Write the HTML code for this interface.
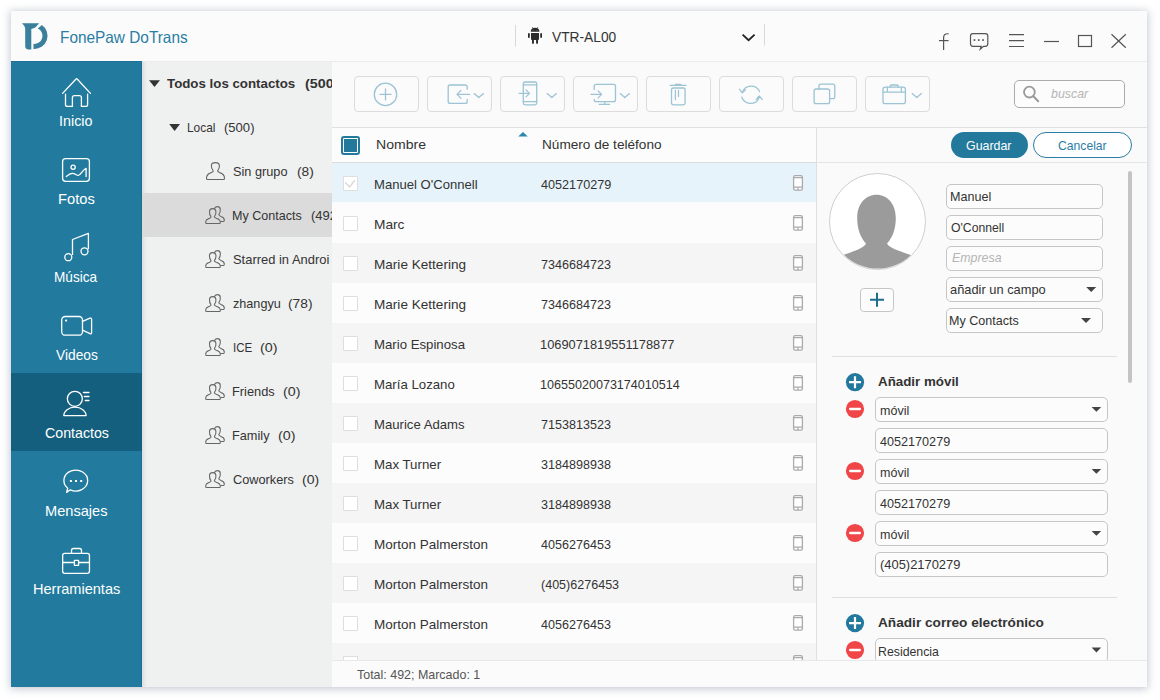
<!DOCTYPE html>
<html><head><meta charset="utf-8">
<style>
*{box-sizing:border-box;margin:0;padding:0}
html,body{width:1160px;height:700px;overflow:hidden;background:#fff;font-family:"Liberation Sans",sans-serif}
.a{position:absolute}
.t{position:absolute;white-space:pre;line-height:1;transform-origin:0 0}
#clipR{position:absolute;left:817px;top:162px;width:330px;height:498px;overflow:hidden}
#clipG{position:absolute;left:142px;top:61px;width:190px;height:626px;overflow:hidden}
</style></head><body>
<div class="a" style="left:11px;top:11px;width:1136px;height:676px;background:#fafafa;box-shadow:0 1px 8px 1px rgba(60,80,110,.30)"></div>
<div class="a" style="left:11px;top:11px;width:1136px;height:50px;background:#fbfbfb"></div>
<div class="a" style="left:142px;top:61px;width:1005px;height:1px;background:#ebebeb"></div>
<div class="a" style="left:11px;top:61px;width:131px;height:626px;background:#227b9e;border-top:1px solid #1c7196;border-right:1px solid #1b7093"></div>
<div class="a" style="left:11px;top:373px;width:131px;height:78px;background:#155f7e"></div>
<div class="a" style="left:142px;top:62px;width:190px;height:625px;background:#eff0f0"></div>
<div class="a" style="left:142px;top:62px;width:5px;height:625px;background:linear-gradient(to right,#dcdee2,#eff0f0)"></div>
<div class="a" style="left:142px;top:193px;width:190px;height:44px;background:#dbdbdb"></div>
<div class="a" style="left:332px;top:62px;width:815px;height:65px;background:#fafafa"></div>
<div class="a" style="left:332px;top:127px;width:815px;height:1px;background:#e0e0e0"></div>
<div class="a" style="left:332px;top:128px;width:484px;height:532px;background:#fcfcfc"></div>
<div class="a" style="left:332px;top:162px;width:484px;height:1px;background:#dcdcdc"></div>
<div class="a" style="left:332px;top:163px;width:484px;height:39px;background:#e6f3fa"></div>
<div class="a" style="left:332px;top:243px;width:484px;height:40px;background:#f5f5f5"></div>
<div class="a" style="left:332px;top:323px;width:484px;height:40px;background:#f5f5f5"></div>
<div class="a" style="left:332px;top:403px;width:484px;height:40px;background:#f5f5f5"></div>
<div class="a" style="left:332px;top:483px;width:484px;height:40px;background:#f5f5f5"></div>
<div class="a" style="left:332px;top:563px;width:484px;height:40px;background:#f5f5f5"></div>
<div class="a" style="left:332px;top:643px;width:484px;height:17px;background:#f5f5f5"></div>
<div class="a" style="left:816px;top:128px;width:1px;height:532px;background:#e0e0e0"></div>
<div class="a" style="left:817px;top:128px;width:330px;height:532px;background:#fafafa"></div>
<div class="a" style="left:817px;top:162px;width:330px;height:1px;background:#e6e6e6"></div>
<div class="a" style="left:332px;top:660px;width:815px;height:27px;background:#fbfbfb"></div>
<div class="a" style="left:332px;top:660px;width:815px;height:1px;background:#e8e8e8"></div>
<div class="a" style="left:341px;top:136px;width:19px;height:19px;border:2px solid #22799c;border-radius:3px;background:#fff"></div>
<div class="a" style="left:344px;top:139px;width:13px;height:13px;background:#22799c"></div>
<div class="a" style="left:343px;top:176px;width:15px;height:15px;border:1px solid #dedede;background:#fff;border-radius:1px"></div>
<div class="a" style="left:343px;top:216px;width:15px;height:15px;border:1px solid #dedede;background:#fff;border-radius:1px"></div>
<div class="a" style="left:343px;top:256px;width:15px;height:15px;border:1px solid #dedede;background:#fff;border-radius:1px"></div>
<div class="a" style="left:343px;top:296px;width:15px;height:15px;border:1px solid #dedede;background:#fff;border-radius:1px"></div>
<div class="a" style="left:343px;top:336px;width:15px;height:15px;border:1px solid #dedede;background:#fff;border-radius:1px"></div>
<div class="a" style="left:343px;top:376px;width:15px;height:15px;border:1px solid #dedede;background:#fff;border-radius:1px"></div>
<div class="a" style="left:343px;top:416px;width:15px;height:15px;border:1px solid #dedede;background:#fff;border-radius:1px"></div>
<div class="a" style="left:343px;top:456px;width:15px;height:15px;border:1px solid #dedede;background:#fff;border-radius:1px"></div>
<div class="a" style="left:343px;top:496px;width:15px;height:15px;border:1px solid #dedede;background:#fff;border-radius:1px"></div>
<div class="a" style="left:343px;top:536px;width:15px;height:15px;border:1px solid #dedede;background:#fff;border-radius:1px"></div>
<div class="a" style="left:343px;top:576px;width:15px;height:15px;border:1px solid #dedede;background:#fff;border-radius:1px"></div>
<div class="a" style="left:343px;top:616px;width:15px;height:15px;border:1px solid #dedede;background:#fff;border-radius:1px"></div>
<div class="a" style="left:343px;top:656px;width:15px;height:4px;border:1px solid #dedede;border-bottom:none;background:#fff;border-radius:1px"></div>
<div class="a" style="left:354px;top:76px;width:65px;height:36px;border:1px solid #dcdcdc;border-radius:4px;background:#fbfbfb"></div>
<div class="a" style="left:427px;top:76px;width:65px;height:36px;border:1px solid #dcdcdc;border-radius:4px;background:#fbfbfb"></div>
<div class="a" style="left:500px;top:76px;width:65px;height:36px;border:1px solid #dcdcdc;border-radius:4px;background:#fbfbfb"></div>
<div class="a" style="left:573px;top:76px;width:65px;height:36px;border:1px solid #dcdcdc;border-radius:4px;background:#fbfbfb"></div>
<div class="a" style="left:646px;top:76px;width:65px;height:36px;border:1px solid #dcdcdc;border-radius:4px;background:#fbfbfb"></div>
<div class="a" style="left:719px;top:76px;width:65px;height:36px;border:1px solid #dcdcdc;border-radius:4px;background:#fbfbfb"></div>
<div class="a" style="left:792px;top:76px;width:65px;height:36px;border:1px solid #dcdcdc;border-radius:4px;background:#fbfbfb"></div>
<div class="a" style="left:865px;top:76px;width:65px;height:36px;border:1px solid #dcdcdc;border-radius:4px;background:#fbfbfb"></div>
<div class="a" style="left:1014px;top:80px;width:111px;height:28px;border:1px solid #ababab;border-radius:5px;background:#fcfcfc"></div>
<div class="a" style="left:951px;top:132px;width:77px;height:26px;border-radius:13px;background:#22799c"></div>
<div class="a" style="left:1033px;top:132px;width:99px;height:26px;border-radius:13px;border:1px solid #2a7da3;background:#fff"></div>
<div class="a" style="left:829px;top:173px;width:97px;height:97px;border-radius:50%;border:1px solid #cfcfcf;background:#fff"></div>
<div class="a" style="left:860px;top:288px;width:34px;height:24px;border:1px solid #c6c6c6;border-radius:4px;background:#fcfcfc"></div>
<div class="a" style="left:946px;top:184px;width:157px;height:25px;border:1px solid #c6c6c6;border-radius:5px;background:#fcfcfc"></div>
<div class="a" style="left:946px;top:215px;width:157px;height:25px;border:1px solid #c6c6c6;border-radius:5px;background:#fcfcfc"></div>
<div class="a" style="left:946px;top:246px;width:157px;height:25px;border:1px solid #c6c6c6;border-radius:5px;background:#fcfcfc"></div>
<div class="a" style="left:946px;top:277px;width:157px;height:25px;border:1px solid #c6c6c6;border-radius:5px;background:#fcfcfc"></div>
<div class="a" style="left:946px;top:308px;width:157px;height:25px;border:1px solid #c6c6c6;border-radius:5px;background:#fcfcfc"></div>
<div class="a" style="left:832px;top:356px;width:285px;height:1px;background:#e0e0e0"></div>
<div class="a" style="left:832px;top:597px;width:285px;height:1px;background:#e0e0e0"></div>
<div class="a" style="left:875px;top:397px;width:233px;height:25px;border:1px solid #c6c6c6;border-radius:5px;background:#fcfcfc"></div>
<div class="a" style="left:875px;top:428px;width:233px;height:25px;border:1px solid #c6c6c6;border-radius:5px;background:#fcfcfc"></div>
<div class="a" style="left:875px;top:459px;width:233px;height:25px;border:1px solid #c6c6c6;border-radius:5px;background:#fcfcfc"></div>
<div class="a" style="left:875px;top:490px;width:233px;height:25px;border:1px solid #c6c6c6;border-radius:5px;background:#fcfcfc"></div>
<div class="a" style="left:875px;top:521px;width:233px;height:25px;border:1px solid #c6c6c6;border-radius:5px;background:#fcfcfc"></div>
<div class="a" style="left:875px;top:552px;width:233px;height:25px;border:1px solid #c6c6c6;border-radius:5px;background:#fcfcfc"></div>
<div class="a" style="left:875px;top:638px;width:233px;height:25px;border:1px solid #c6c6c6;border-radius:5px;background:#fcfcfc"></div>
<div class="a" style="left:1128px;top:171px;width:4px;height:212px;border-radius:2px;background:#c4c4c4"></div>
<div class="a" style="left:332px;top:660px;width:815px;height:27px;background:#fbfbfb;border-top:1px solid #e8e8e8"></div>
<svg class="a" style="left:0;top:0" width="1160" height="700" viewBox="0 0 1160 700"><g transform="translate(18,19)" fill="#3a7f9b"><path d="M4,4.2 L21.2,4.2 L17.6,8.3 Q15.8,9.7 13.3,9.9 L13.3,30.6 L10.5,30.6 Q7.2,30.2 7.2,27 L7.2,9.2 Q6.6,6.6 4,4.2 Z"/><path d="M23.9,6.07 A13.1,13.1 0 0 1 15.5,29.9 L15.5,24.85 A8.1,8.1 0 0 0 19.8,9.44 Z"/></g><rect x="515" y="25" width="1" height="21.5" fill="#d9d9d9"/><rect x="764" y="24" width="1" height="21.5" fill="#d9d9d9"/><g fill="#2b2b2b"><path d="M530.8,31.7 A4.3,3.9 0 0 1 539.4,31.7 Z"/><path d="M531,33 H539 V39 Q539,40 538,40 H532 Q531,40 531,39 Z"/><rect x="528" y="33" width="1.8" height="5" rx="0.9"/><rect x="540.2" y="33" width="1.8" height="5" rx="0.9"/><rect x="532" y="39" width="1.9" height="4.8" rx="0.9"/><rect x="536.1" y="39" width="1.9" height="4.8" rx="0.9"/><line x1="532.3" y1="27" x2="533.2" y2="28.6" stroke="#2b2b2b" stroke-width="0.6"/><line x1="537.9" y1="27" x2="537" y2="28.6" stroke="#2b2b2b" stroke-width="0.6"/></g><circle cx="533.2" cy="30.2" r="0.5" fill="#777"/><circle cx="537" cy="30.2" r="0.5" fill="#777"/><polyline points="742.6,34.6 748.6,40.2 754.6,34.6" stroke="#222" stroke-width="1.8" fill="none"/><path d="M948.6,33.8 Q943.6,33.2 943.6,37.5 V50" stroke="#555" stroke-width="1.2" fill="none"/><path d="M939,40.6 H948.6" stroke="#555" stroke-width="1.2" fill="none"/><path d="M973,33.6 H985.3 Q987.8,33.6 987.8,36.1 V43.8 Q987.8,46.3 985.3,46.3 H983.5 L980.3,49.2 L981.2,46.3 H973 Q970.5,46.3 970.5,43.8 V36.1 Q970.5,33.6 973,33.6 Z" stroke="#555" stroke-width="1.2" fill="none"/><g fill="#555"><rect x="973.6" y="39.2" width="1.7" height="1.7"/><rect x="977.9" y="39.2" width="1.7" height="1.7"/><rect x="982.2" y="39.2" width="1.7" height="1.7"/></g><path d="M1009,34.6 H1024 M1009,40.6 H1024 M1009,46.5 H1024" stroke="#555" stroke-width="1.2" fill="none"/><path d="M1044,41.5 H1059" stroke="#555" stroke-width="1.2" fill="none"/><rect x="1078.5" y="35.5" width="13" height="11" stroke="#555" stroke-width="1.2" fill="none"/><path d="M1111.5,34.2 L1125.8,47.8 M1125.8,34.2 L1111.5,47.8" stroke="#555" stroke-width="1.2" fill="none"/><g stroke="#fff" stroke-width="1.3" fill="none" stroke-linecap="round" stroke-linejoin="round"><path d="M62.6,93.4 L75.8,79.2 Q76.6,78.4 77.4,79.2 L90.4,93.4"/><path d="M65.5,94.2 V104.4 Q65.5,106.4 67.5,106.4 H72.4 V97.6 Q72.4,95.6 74.4,95.6 H79.4 Q81.4,95.6 81.4,97.6 V106.4 H85.6 Q87.6,106.4 87.6,104.4 V94.2"/><rect x="62.6" y="158.6" width="26.8" height="22.7" rx="3"/><circle cx="73.1" cy="167.3" r="2.1"/><path d="M66.3,176.5 C68.5,174.5 70.5,173.3 72.5,173.3 C75,173.3 76.3,175.4 78.2,175.4 C80.8,175.4 82.5,169.5 86.1,168.3 V176.6"/><path d="M72.5,254.4 V239.5 L88.4,233.4 V248.4"/><circle cx="68.3" cy="257.2" r="3.5"/><circle cx="84.5" cy="251.3" r="3.5"/><rect x="61.7" y="316.5" width="20.8" height="18.7" rx="3.5"/><path d="M82.5,321.4 L90,318.2 Q91.6,317.6 91.6,319.3 V332.6 Q91.6,334.3 90,333.6 L82.5,330.2"/><circle cx="66.1" cy="320.6" r="0.5"/><circle cx="74.85" cy="398.85" r="7.5"/><path d="M63.8,415.6 A11.15,8.4 0 0 1 86.1,415.6 Z"/><path d="M83.4,392.5 H89 M84.3,396.5 H89 M85.3,400.5 H89"/><path d="M67.7,488.2 A11.9,10.4 0 1 1 70.3,489.8 L66.6,492.4 Z"/></g><g fill="#fff"><rect x="69.9" y="480" width="2" height="2"/><rect x="75" y="480" width="2" height="2"/><rect x="80.2" y="480" width="2" height="2"/></g><g stroke="#fff" stroke-width="1.3" fill="none" stroke-linecap="round" stroke-linejoin="round"><rect x="62.65" y="553.4" width="26.8" height="19.9" rx="2"/><path d="M71.5,553.4 V550.5 Q71.5,548.5 73.5,548.5 H79.5 Q81.5,548.5 81.5,550.5 V553.4"/><path d="M62.65,562.5 H74.4 M78.6,562.5 H89.45"/><rect x="74.4" y="560.4" width="4.2" height="4.9"/></g><path d="M149,80.2 H160 L154.5,87 Z" fill="#333"/><path d="M169.2,124 H180 L174.6,131 Z" fill="#333"/><path d="M213.2,170.8 C211.6,169 211.2,166.8 211.4,165 C211.7,163.2 213.2,162.6 215.4,162.6 C217.6,162.6 219.1,163.4 219.4,165.3 C219.6,167 219.2,169 217.6,170.8 C217.5,171.6 218.2,172.1 219.6,172.6 C223,173.6 224.5,176 224.5,178.2 Q224.5,179.5 223.6,179.5 L207.4,179.5 Q206.5,179.5 206.5,178.2 C206.5,176 208,173.6 211.3,172.6 C212.8,172.1 213.4,171.6 213.2,170.8 Z" stroke="#666" stroke-width="1.1" fill="none" stroke-linejoin="round"/><g transform="translate(0,0)"><path d="M211,216.6 C209.6,215 209.4,212.8 209.5,211.2 C209.7,209.3 210.9,208.6 212.7,208.6 C214.5,208.6 215.7,209.3 215.9,211.2 C216.1,212.8 215.8,215 214.4,216.6 C214.3,217.3 214.9,217.8 216.3,218.3 C219.2,219.2 220.3,221 220.3,222.2 Q220.3,223.5 219.5,223.5 L206.5,223.5 Q205.7,223.5 205.7,222.2 C205.7,221 206.8,219.2 209.6,218.3 C210.9,217.8 211.1,217.3 211,216.6 Z" stroke="#666" stroke-width="1.1" fill="none" stroke-linejoin="round"/><path d="M214.3,208.9 C214.8,207.3 215.9,206.6 217.2,206.6 C219,206.6 220.2,207.5 220.3,209.4 C220.5,211.2 220,213.2 218.8,214.6 C218.8,215.4 219.4,215.9 221,216.4 C223.4,217.2 224.3,218.8 224.3,219.9 Q224.3,221.5 223.5,221.5 L220.6,221.5" stroke="#666" stroke-width="1.1" fill="none" stroke-linejoin="round"/></g><g transform="translate(0,44)"><path d="M211,216.6 C209.6,215 209.4,212.8 209.5,211.2 C209.7,209.3 210.9,208.6 212.7,208.6 C214.5,208.6 215.7,209.3 215.9,211.2 C216.1,212.8 215.8,215 214.4,216.6 C214.3,217.3 214.9,217.8 216.3,218.3 C219.2,219.2 220.3,221 220.3,222.2 Q220.3,223.5 219.5,223.5 L206.5,223.5 Q205.7,223.5 205.7,222.2 C205.7,221 206.8,219.2 209.6,218.3 C210.9,217.8 211.1,217.3 211,216.6 Z" stroke="#666" stroke-width="1.1" fill="none" stroke-linejoin="round"/><path d="M214.3,208.9 C214.8,207.3 215.9,206.6 217.2,206.6 C219,206.6 220.2,207.5 220.3,209.4 C220.5,211.2 220,213.2 218.8,214.6 C218.8,215.4 219.4,215.9 221,216.4 C223.4,217.2 224.3,218.8 224.3,219.9 Q224.3,221.5 223.5,221.5 L220.6,221.5" stroke="#666" stroke-width="1.1" fill="none" stroke-linejoin="round"/></g><g transform="translate(0,88)"><path d="M211,216.6 C209.6,215 209.4,212.8 209.5,211.2 C209.7,209.3 210.9,208.6 212.7,208.6 C214.5,208.6 215.7,209.3 215.9,211.2 C216.1,212.8 215.8,215 214.4,216.6 C214.3,217.3 214.9,217.8 216.3,218.3 C219.2,219.2 220.3,221 220.3,222.2 Q220.3,223.5 219.5,223.5 L206.5,223.5 Q205.7,223.5 205.7,222.2 C205.7,221 206.8,219.2 209.6,218.3 C210.9,217.8 211.1,217.3 211,216.6 Z" stroke="#666" stroke-width="1.1" fill="none" stroke-linejoin="round"/><path d="M214.3,208.9 C214.8,207.3 215.9,206.6 217.2,206.6 C219,206.6 220.2,207.5 220.3,209.4 C220.5,211.2 220,213.2 218.8,214.6 C218.8,215.4 219.4,215.9 221,216.4 C223.4,217.2 224.3,218.8 224.3,219.9 Q224.3,221.5 223.5,221.5 L220.6,221.5" stroke="#666" stroke-width="1.1" fill="none" stroke-linejoin="round"/></g><g transform="translate(0,132)"><path d="M211,216.6 C209.6,215 209.4,212.8 209.5,211.2 C209.7,209.3 210.9,208.6 212.7,208.6 C214.5,208.6 215.7,209.3 215.9,211.2 C216.1,212.8 215.8,215 214.4,216.6 C214.3,217.3 214.9,217.8 216.3,218.3 C219.2,219.2 220.3,221 220.3,222.2 Q220.3,223.5 219.5,223.5 L206.5,223.5 Q205.7,223.5 205.7,222.2 C205.7,221 206.8,219.2 209.6,218.3 C210.9,217.8 211.1,217.3 211,216.6 Z" stroke="#666" stroke-width="1.1" fill="none" stroke-linejoin="round"/><path d="M214.3,208.9 C214.8,207.3 215.9,206.6 217.2,206.6 C219,206.6 220.2,207.5 220.3,209.4 C220.5,211.2 220,213.2 218.8,214.6 C218.8,215.4 219.4,215.9 221,216.4 C223.4,217.2 224.3,218.8 224.3,219.9 Q224.3,221.5 223.5,221.5 L220.6,221.5" stroke="#666" stroke-width="1.1" fill="none" stroke-linejoin="round"/></g><g transform="translate(0,176)"><path d="M211,216.6 C209.6,215 209.4,212.8 209.5,211.2 C209.7,209.3 210.9,208.6 212.7,208.6 C214.5,208.6 215.7,209.3 215.9,211.2 C216.1,212.8 215.8,215 214.4,216.6 C214.3,217.3 214.9,217.8 216.3,218.3 C219.2,219.2 220.3,221 220.3,222.2 Q220.3,223.5 219.5,223.5 L206.5,223.5 Q205.7,223.5 205.7,222.2 C205.7,221 206.8,219.2 209.6,218.3 C210.9,217.8 211.1,217.3 211,216.6 Z" stroke="#666" stroke-width="1.1" fill="none" stroke-linejoin="round"/><path d="M214.3,208.9 C214.8,207.3 215.9,206.6 217.2,206.6 C219,206.6 220.2,207.5 220.3,209.4 C220.5,211.2 220,213.2 218.8,214.6 C218.8,215.4 219.4,215.9 221,216.4 C223.4,217.2 224.3,218.8 224.3,219.9 Q224.3,221.5 223.5,221.5 L220.6,221.5" stroke="#666" stroke-width="1.1" fill="none" stroke-linejoin="round"/></g><g transform="translate(0,220)"><path d="M211,216.6 C209.6,215 209.4,212.8 209.5,211.2 C209.7,209.3 210.9,208.6 212.7,208.6 C214.5,208.6 215.7,209.3 215.9,211.2 C216.1,212.8 215.8,215 214.4,216.6 C214.3,217.3 214.9,217.8 216.3,218.3 C219.2,219.2 220.3,221 220.3,222.2 Q220.3,223.5 219.5,223.5 L206.5,223.5 Q205.7,223.5 205.7,222.2 C205.7,221 206.8,219.2 209.6,218.3 C210.9,217.8 211.1,217.3 211,216.6 Z" stroke="#666" stroke-width="1.1" fill="none" stroke-linejoin="round"/><path d="M214.3,208.9 C214.8,207.3 215.9,206.6 217.2,206.6 C219,206.6 220.2,207.5 220.3,209.4 C220.5,211.2 220,213.2 218.8,214.6 C218.8,215.4 219.4,215.9 221,216.4 C223.4,217.2 224.3,218.8 224.3,219.9 Q224.3,221.5 223.5,221.5 L220.6,221.5" stroke="#666" stroke-width="1.1" fill="none" stroke-linejoin="round"/></g><g transform="translate(0,264)"><path d="M211,216.6 C209.6,215 209.4,212.8 209.5,211.2 C209.7,209.3 210.9,208.6 212.7,208.6 C214.5,208.6 215.7,209.3 215.9,211.2 C216.1,212.8 215.8,215 214.4,216.6 C214.3,217.3 214.9,217.8 216.3,218.3 C219.2,219.2 220.3,221 220.3,222.2 Q220.3,223.5 219.5,223.5 L206.5,223.5 Q205.7,223.5 205.7,222.2 C205.7,221 206.8,219.2 209.6,218.3 C210.9,217.8 211.1,217.3 211,216.6 Z" stroke="#666" stroke-width="1.1" fill="none" stroke-linejoin="round"/><path d="M214.3,208.9 C214.8,207.3 215.9,206.6 217.2,206.6 C219,206.6 220.2,207.5 220.3,209.4 C220.5,211.2 220,213.2 218.8,214.6 C218.8,215.4 219.4,215.9 221,216.4 C223.4,217.2 224.3,218.8 224.3,219.9 Q224.3,221.5 223.5,221.5 L220.6,221.5" stroke="#666" stroke-width="1.1" fill="none" stroke-linejoin="round"/></g><g transform="translate(0,76)"><circle cx="385.5" cy="18.4" r="11.2" stroke="#9cc4d4" stroke-width="1.3" fill="none" stroke-linecap="round" stroke-linejoin="round"/><path d="M380,18.4 H391 M385.5,12.9 V23.9" stroke="#9cc4d4" stroke-width="1.3" fill="none" stroke-linecap="round" stroke-linejoin="round"/><path d="M467.2,13.2 V11 Q467.2,9 465.2,9 H450.2 Q448.2,9 448.2,11 V25.4 Q448.2,27.4 450.2,27.4 H465.2 Q467.2,27.4 467.2,25.4 V23.4" stroke="#9cc4d4" stroke-width="1.3" fill="none" stroke-linecap="round" stroke-linejoin="round"/><path d="M469.6,18.4 H457 M461,14.4 L457,18.4 L461,22.4" stroke="#9cc4d4" stroke-width="1.3" fill="none" stroke-linecap="round" stroke-linejoin="round"/><polyline points="474.2,17.6 478.8,21.6 483.4,17.6" stroke="#9cc4d4" stroke-width="1.3" fill="none" stroke-linecap="round" stroke-linejoin="round"/><rect x="523.3" y="6" width="13.4" height="22.8" rx="1.8" stroke="#9cc4d4" stroke-width="1.3" fill="none" stroke-linecap="round" stroke-linejoin="round"/><path d="M523.3,8.8 H536.7 M523.3,25.6 H536.7" stroke="#9cc4d4" stroke-width="1.3" fill="none" stroke-linecap="round" stroke-linejoin="round"/><path d="M519.2,17.4 H529.5 M526,13.9 L529.5,17.4 L526,20.9" stroke="#9cc4d4" stroke-width="1.3" fill="none" stroke-linecap="round" stroke-linejoin="round"/><polyline points="547.2,17.6 551.8,21.6 556.4,17.6" stroke="#9cc4d4" stroke-width="1.3" fill="none" stroke-linecap="round" stroke-linejoin="round"/><path d="M594.2,13.5 V10.3 Q594.2,8.3 596.2,8.3 H613.5 Q615.5,8.3 615.5,10.3 V23.7 Q615.5,25.7 613.5,25.7 H596.2 Q594.2,25.7 594.2,23.7 V23.3" stroke="#9cc4d4" stroke-width="1.3" fill="none" stroke-linecap="round" stroke-linejoin="round"/><path d="M604.8,25.7 V28.4 M599.3,28.4 H609.5" stroke="#9cc4d4" stroke-width="1.3" fill="none" stroke-linecap="round" stroke-linejoin="round"/><path d="M591,18.4 H601.6 M598.1,14.9 L601.6,18.4 L598.1,21.9" stroke="#9cc4d4" stroke-width="1.3" fill="none" stroke-linecap="round" stroke-linejoin="round"/><polyline points="620.2,17.6 624.8,21.6 629.4,17.6" stroke="#9cc4d4" stroke-width="1.3" fill="none" stroke-linecap="round" stroke-linejoin="round"/><path d="M670.2,9.4 H686 M675.5,8.5 H680.8" stroke="#9cc4d4" stroke-width="1.3" fill="none" stroke-linecap="round" stroke-linejoin="round"/><rect x="671.5" y="12" width="13.6" height="16.8" rx="1.8" stroke="#9cc4d4" stroke-width="1.3" fill="none" stroke-linecap="round" stroke-linejoin="round"/><path d="M675.4,14.4 V23.6 M678.5,14.4 V20.5" stroke="#9cc4d4" stroke-width="1.3" fill="none" stroke-linecap="round" stroke-linejoin="round"/><path d="M742.4,16.2 A9.3,9.3 0 0 1 759.6,15.5" stroke="#9cc4d4" stroke-width="1.3" fill="none" stroke-linecap="round" stroke-linejoin="round"/><path d="M759.2,21.4 A9.3,9.3 0 0 1 741.8,21.2" stroke="#9cc4d4" stroke-width="1.3" fill="none" stroke-linecap="round" stroke-linejoin="round"/><path d="M739.6,13.3 L742.3,16.8 L745.4,13.8" stroke="#9cc4d4" stroke-width="1.3" fill="none" stroke-linecap="round" stroke-linejoin="round"/><path d="M756.2,23.4 L759.2,20 L762.2,23.4" stroke="#9cc4d4" stroke-width="1.3" fill="none" stroke-linecap="round" stroke-linejoin="round"/><path d="M819,13 V10 Q819,8.1 820.9,8.1 H832.9 Q834.8,8.1 834.8,10 V20.8 Q834.8,22.7 832.9,22.7 H829.6" stroke="#9cc4d4" stroke-width="1.3" fill="none" stroke-linecap="round" stroke-linejoin="round"/><rect x="814.1" y="13" width="15.5" height="14.6" rx="1.9" stroke="#9cc4d4" stroke-width="1.3" fill="none" stroke-linecap="round" stroke-linejoin="round"/><rect x="883" y="11.2" width="22.4" height="16.4" rx="2.2" stroke="#9cc4d4" stroke-width="1.3" fill="none" stroke-linecap="round" stroke-linejoin="round"/><path d="M890.2,11.2 V10.2 Q890.2,9 891.4,9 H897.1 Q898.3,9 898.3,10.2 V11.2" stroke="#9cc4d4" stroke-width="1.3" fill="none" stroke-linecap="round" stroke-linejoin="round"/><path d="M883,16.1 H905.4 M887.4,11.2 V16.1 M901.4,11.2 V16.1" stroke="#9cc4d4" stroke-width="1.3" fill="none" stroke-linecap="round" stroke-linejoin="round"/><polyline points="912.2,17.6 916.8,21.6 921.4,17.6" stroke="#9cc4d4" stroke-width="1.3" fill="none" stroke-linecap="round" stroke-linejoin="round"/></g><circle cx="1029.4" cy="92.1" r="5.4" stroke="#9a9a9a" stroke-width="1.8" fill="none"/><path d="M1033.4,96.3 L1038.2,101.2" stroke="#9a9a9a" stroke-width="2" stroke-linecap="round"/><path d="M518.2,136.6 H527.8 L523,132 Z" fill="#2a87b0"/><polyline points="345.3,182.6 349.6,187 354.8,180.2" stroke="#d8d8d8" stroke-width="1.4" fill="none"/><g clip-path="url(#clipList)"><g transform="translate(0,0)"><rect x="793.6" y="175.6" width="8.8" height="14.5" rx="1.6" stroke="#ababab" stroke-width="1.3" fill="#fff"/><path d="M793.6,177.6 H802.4 M793.6,187.2 H802.4 M798,187.2 V190" stroke="#ababab" stroke-width="1.2"/></g><g transform="translate(0,40)"><rect x="793.6" y="175.6" width="8.8" height="14.5" rx="1.6" stroke="#ababab" stroke-width="1.3" fill="#fff"/><path d="M793.6,177.6 H802.4 M793.6,187.2 H802.4 M798,187.2 V190" stroke="#ababab" stroke-width="1.2"/></g><g transform="translate(0,80)"><rect x="793.6" y="175.6" width="8.8" height="14.5" rx="1.6" stroke="#ababab" stroke-width="1.3" fill="#fff"/><path d="M793.6,177.6 H802.4 M793.6,187.2 H802.4 M798,187.2 V190" stroke="#ababab" stroke-width="1.2"/></g><g transform="translate(0,120)"><rect x="793.6" y="175.6" width="8.8" height="14.5" rx="1.6" stroke="#ababab" stroke-width="1.3" fill="#fff"/><path d="M793.6,177.6 H802.4 M793.6,187.2 H802.4 M798,187.2 V190" stroke="#ababab" stroke-width="1.2"/></g><g transform="translate(0,160)"><rect x="793.6" y="175.6" width="8.8" height="14.5" rx="1.6" stroke="#ababab" stroke-width="1.3" fill="#fff"/><path d="M793.6,177.6 H802.4 M793.6,187.2 H802.4 M798,187.2 V190" stroke="#ababab" stroke-width="1.2"/></g><g transform="translate(0,200)"><rect x="793.6" y="175.6" width="8.8" height="14.5" rx="1.6" stroke="#ababab" stroke-width="1.3" fill="#fff"/><path d="M793.6,177.6 H802.4 M793.6,187.2 H802.4 M798,187.2 V190" stroke="#ababab" stroke-width="1.2"/></g><g transform="translate(0,240)"><rect x="793.6" y="175.6" width="8.8" height="14.5" rx="1.6" stroke="#ababab" stroke-width="1.3" fill="#fff"/><path d="M793.6,177.6 H802.4 M793.6,187.2 H802.4 M798,187.2 V190" stroke="#ababab" stroke-width="1.2"/></g><g transform="translate(0,280)"><rect x="793.6" y="175.6" width="8.8" height="14.5" rx="1.6" stroke="#ababab" stroke-width="1.3" fill="#fff"/><path d="M793.6,177.6 H802.4 M793.6,187.2 H802.4 M798,187.2 V190" stroke="#ababab" stroke-width="1.2"/></g><g transform="translate(0,320)"><rect x="793.6" y="175.6" width="8.8" height="14.5" rx="1.6" stroke="#ababab" stroke-width="1.3" fill="#fff"/><path d="M793.6,177.6 H802.4 M793.6,187.2 H802.4 M798,187.2 V190" stroke="#ababab" stroke-width="1.2"/></g><g transform="translate(0,360)"><rect x="793.6" y="175.6" width="8.8" height="14.5" rx="1.6" stroke="#ababab" stroke-width="1.3" fill="#fff"/><path d="M793.6,177.6 H802.4 M793.6,187.2 H802.4 M798,187.2 V190" stroke="#ababab" stroke-width="1.2"/></g><g transform="translate(0,400)"><rect x="793.6" y="175.6" width="8.8" height="14.5" rx="1.6" stroke="#ababab" stroke-width="1.3" fill="#fff"/><path d="M793.6,177.6 H802.4 M793.6,187.2 H802.4 M798,187.2 V190" stroke="#ababab" stroke-width="1.2"/></g><g transform="translate(0,440)"><rect x="793.6" y="175.6" width="8.8" height="14.5" rx="1.6" stroke="#ababab" stroke-width="1.3" fill="#fff"/><path d="M793.6,177.6 H802.4 M793.6,187.2 H802.4 M798,187.2 V190" stroke="#ababab" stroke-width="1.2"/></g><g transform="translate(0,480)"><rect x="793.6" y="175.6" width="8.8" height="14.5" rx="1.6" stroke="#ababab" stroke-width="1.3" fill="#fff"/><path d="M793.6,177.6 H802.4 M793.6,187.2 H802.4 M798,187.2 V190" stroke="#ababab" stroke-width="1.2"/></g></g><defs><clipPath id="clipAv"><circle cx="877.6" cy="221" r="47.6"/></clipPath><clipPath id="clipList"><rect x="332" y="127" width="484" height="533"/></clipPath><clipPath id="clipRight"><rect x="817" y="162" width="330" height="498"/></clipPath></defs><path clip-path="url(#clipAv)" fill="#9b9b9b" d="M866,243.5 C860.5,237.5 857.2,229 857.2,218 C857.2,204 865.5,194.8 876.5,194.8 C887.5,194.8 895.8,204 895.8,218 C895.8,229 892.5,237.5 887,243.5 C888.5,246.5 893,249 912,255.5 L930,275 L825,275 L842,255.5 C861,249 864.5,246.5 866,243.5 Z"/><path d="M870,299.8 H884 M877,292.8 V306.8" stroke="#1d6d8f" stroke-width="2"/><g clip-path="url(#clipRight)"><circle cx="855" cy="382.2" r="9.1" fill="#22799d"/><path d="M849,382.2 H861 M855,376.2 V388.2" stroke="#fff" stroke-width="2.2"/><circle cx="855" cy="623.1" r="9.1" fill="#22799d"/><path d="M849,623.1 H861 M855,617.1 V629.1" stroke="#fff" stroke-width="2.2"/><circle cx="855" cy="409" r="9.1" fill="#f14647"/><path d="M850.1,409 H859.9" stroke="#fff" stroke-width="2.3" stroke-linecap="round"/><circle cx="855" cy="471" r="9.1" fill="#f14647"/><path d="M850.1,471 H859.9" stroke="#fff" stroke-width="2.3" stroke-linecap="round"/><circle cx="855" cy="533" r="9.1" fill="#f14647"/><path d="M850.1,533 H859.9" stroke="#fff" stroke-width="2.3" stroke-linecap="round"/><circle cx="855" cy="650" r="9.1" fill="#f14647"/><path d="M850.1,650 H859.9" stroke="#fff" stroke-width="2.3" stroke-linecap="round"/><g fill="#444"><path d="M1086.2,287 H1096.2 L1091.2,292 Z"/><path d="M1081,317.9 H1091 L1086,323 Z"/><path d="M1091.6,407 H1101.2 L1096.4,411.8 Z"/><path d="M1091.6,469 H1101.2 L1096.4,473.8 Z"/><path d="M1091.6,531 H1101.2 L1096.4,535.8 Z"/><path d="M1091.6,647.6 H1101.2 L1096.4,652.6 Z"/></g></g></svg>
<div class="t" style="left:60.17px;top:28.63px;font-size:16.5px;color:#2a7da3;transform:scaleX(0.9322)">FonePaw DoTrans</div>
<div class="t" style="left:552.00px;top:28.78px;font-size:15.5px;color:#333;transform:scaleX(0.8881)">VTR-AL00</div>
<div class="t" style="left:59.31px;top:114.13px;font-size:14.5px;color:#ffffff;transform:scaleX(0.9882)">Inicio</div>
<div class="t" style="left:57.74px;top:192.13px;font-size:14.5px;color:#ffffff;transform:scaleX(1.0139)">Fotos</div>
<div class="t" style="left:54.06px;top:270.13px;font-size:14.5px;color:#ffffff;transform:scaleX(0.9375)">Música</div>
<div class="t" style="left:55.70px;top:348.13px;font-size:14.5px;color:#ffffff;transform:scaleX(0.9493)">Videos</div>
<div class="t" style="left:44.65px;top:426.13px;font-size:14.5px;color:#ffffff;transform:scaleX(0.9795)">Contactos</div>
<div class="t" style="left:44.84px;top:504.13px;font-size:14.5px;color:#ffffff;transform:scaleX(1.0081)">Mensajes</div>
<div class="t" style="left:32.50px;top:582.13px;font-size:14.5px;color:#ffffff;transform:scaleX(1.0026)">Herramientas</div>
<div class="t" style="left:167.10px;top:76.50px;font-size:13px;color:#333;font-weight:bold;transform:scaleX(1.0223)">Todos los contactos</div>
<div class="t" style="left:186.72px;top:120.97px;font-size:13.5px;color:#333;transform:scaleX(0.8793)">Local</div>
<div class="t" style="left:224.40px;top:120.97px;font-size:13.5px;color:#333;transform:scaleX(0.9671)">(500)</div>
<div class="t" style="left:376.16px;top:138.07px;font-size:13.5px;color:#333;transform:scaleX(1.0407)">Nombre</div>
<div class="t" style="left:542.29px;top:138.07px;font-size:13.5px;color:#333;transform:scaleX(1.0080)">Número de teléfono</div>
<div class="t" style="left:357.00px;top:667.70px;font-size:13px;color:#555;transform:scaleX(0.9580)">Total: 492; Marcado: 1</div>
<div class="t" style="left:966.20px;top:138.57px;font-size:13.5px;color:#ffffff;transform:scaleX(0.9175)">Guardar</div>
<div class="t" style="left:1057.80px;top:138.57px;font-size:13.5px;color:#2a7da3;transform:scaleX(0.9004)">Cancelar</div>
<div class="t" style="left:950.47px;top:189.97px;font-size:13.5px;color:#333;transform:scaleX(0.9312)">Manuel</div>
<div class="t" style="left:951.40px;top:221.37px;font-size:13.5px;color:#333;transform:scaleX(0.9056)">O'Connell</div>
<div class="t" style="left:951.70px;top:251.37px;font-size:13.5px;color:#b4b4b4;font-style:italic;transform:scaleX(0.9172)">Empresa</div>
<div class="t" style="left:950.30px;top:283.37px;font-size:13.5px;color:#333;transform:scaleX(0.9515)">añadir un campo</div>
<div class="t" style="left:949.37px;top:314.27px;font-size:13.5px;color:#333;transform:scaleX(0.9290)">My Contacts</div>
<div class="t" style="left:877.90px;top:375.30px;font-size:13px;color:#333;font-weight:bold;transform:scaleX(1.0266)">Añadir móvil</div>
<div class="t" style="left:879.60px;top:403.87px;font-size:13.5px;color:#333;transform:scaleX(0.9269)">móvil</div>
<div class="t" style="left:879.60px;top:465.87px;font-size:13.5px;color:#333;transform:scaleX(0.9269)">móvil</div>
<div class="t" style="left:879.60px;top:527.87px;font-size:13.5px;color:#333;transform:scaleX(0.9269)">móvil</div>
<div class="t" style="left:879.80px;top:434.67px;font-size:13.5px;color:#333;transform:scaleX(0.9347)">4052170279</div>
<div class="t" style="left:879.80px;top:496.67px;font-size:13.5px;color:#333;transform:scaleX(0.9347)">4052170279</div>
<div class="t" style="left:879.80px;top:558.47px;font-size:13.5px;color:#333;transform:scaleX(0.9562)">(405)2170279</div>
<div class="t" style="left:877.90px;top:615.80px;font-size:13px;color:#333;font-weight:bold;transform:scaleX(1.0489)">Añadir correo electrónico</div>
<div class="t" style="left:1051.40px;top:87.07px;font-size:13.5px;color:#b4b4b4;font-style:italic;transform:scaleX(0.9165)">buscar</div>
<div class="a" style="left:0;top:0;width:1160px;height:700px;clip-path:inset(61px 828px 13px 142px)"><div class="t" style="left:304.70px;top:76.50px;font-size:13px;color:#333;font-weight:bold;transform:scaleX(1.1000)">(500)</div>
<div class="t" style="left:233.40px;top:164.57px;font-size:13.5px;color:#333;transform:scaleX(0.9427)">Sin grupo</div>
<div class="t" style="left:296.80px;top:164.57px;font-size:13.5px;color:#333;transform:scaleX(1.0185)">(8)</div>
<div class="t" style="left:232.47px;top:208.57px;font-size:13.5px;color:#333;transform:scaleX(0.9290)">My Contacts</div>
<div class="t" style="left:310.50px;top:208.57px;font-size:13.5px;color:#333;transform:scaleX(0.9600)">(492)</div>
<div class="t" style="left:233.40px;top:252.57px;font-size:13.5px;color:#333;transform:scaleX(0.9575)">Starred in Androi</div>
<div class="t" style="left:233.40px;top:296.57px;font-size:13.5px;color:#333;transform:scaleX(0.9360)">zhangyu</div>
<div class="t" style="left:288.10px;top:296.57px;font-size:13.5px;color:#333;transform:scaleX(1.0208)">(78)</div>
<div class="t" style="left:232.54px;top:340.57px;font-size:13.5px;color:#333;transform:scaleX(0.8558)">ICE</div>
<div class="t" style="left:259.90px;top:340.57px;font-size:13.5px;color:#333;transform:scaleX(1.0560)">(0)</div>
<div class="t" style="left:232.45px;top:384.57px;font-size:13.5px;color:#333;transform:scaleX(0.9488)">Friends</div>
<div class="t" style="left:282.90px;top:384.57px;font-size:13.5px;color:#333;transform:scaleX(1.0560)">(0)</div>
<div class="t" style="left:232.46px;top:428.57px;font-size:13.5px;color:#333;transform:scaleX(0.9436)">Family</div>
<div class="t" style="left:277.70px;top:428.57px;font-size:13.5px;color:#333;transform:scaleX(1.0560)">(0)</div>
<div class="t" style="left:233.40px;top:472.57px;font-size:13.5px;color:#333;transform:scaleX(0.9434)">Coworkers</div>
<div class="t" style="left:302.30px;top:472.57px;font-size:13.5px;color:#333;transform:scaleX(1.0373)">(0)</div></div>
<div class="a" style="left:0;top:0;width:1160px;height:700px;clip-path:inset(127px 344px 40px 332px)"><div class="t" style="left:374.23px;top:177.57px;font-size:13.5px;color:#333;transform:scaleX(0.9690)">Manuel O'Connell</div>
<div class="t" style="left:540.80px;top:177.57px;font-size:13.5px;color:#333;transform:scaleX(0.9360)">4052170279</div>
<div class="t" style="left:374.18px;top:217.57px;font-size:13.5px;color:#333;transform:scaleX(1.0154)">Marc</div>
<div class="t" style="left:374.19px;top:257.57px;font-size:13.5px;color:#333;transform:scaleX(1.0052)">Marie Kettering</div>
<div class="t" style="left:540.80px;top:257.57px;font-size:13.5px;color:#333;transform:scaleX(0.9306)">7346684723</div>
<div class="t" style="left:374.19px;top:297.57px;font-size:13.5px;color:#333;transform:scaleX(1.0052)">Marie Kettering</div>
<div class="t" style="left:540.80px;top:297.57px;font-size:13.5px;color:#333;transform:scaleX(0.9306)">7346684723</div>
<div class="t" style="left:374.22px;top:337.57px;font-size:13.5px;color:#333;transform:scaleX(0.9780)">Mario Espinosa</div>
<div class="t" style="left:539.85px;top:337.57px;font-size:13.5px;color:#333;transform:scaleX(0.9490)">1069071819551178877</div>
<div class="t" style="left:374.22px;top:377.57px;font-size:13.5px;color:#333;transform:scaleX(0.9785)">María Lozano</div>
<div class="t" style="left:539.87px;top:377.57px;font-size:13.5px;color:#333;transform:scaleX(0.9308)">10655020073174010514</div>
<div class="t" style="left:374.23px;top:417.57px;font-size:13.5px;color:#333;transform:scaleX(0.9728)">Maurice Adams</div>
<div class="t" style="left:540.80px;top:417.57px;font-size:13.5px;color:#333;transform:scaleX(0.9306)">7153813523</div>
<div class="t" style="left:374.22px;top:457.57px;font-size:13.5px;color:#333;transform:scaleX(0.9821)">Max Turner</div>
<div class="t" style="left:540.80px;top:457.57px;font-size:13.5px;color:#333;transform:scaleX(0.9306)">3184898938</div>
<div class="t" style="left:374.22px;top:497.57px;font-size:13.5px;color:#333;transform:scaleX(0.9821)">Max Turner</div>
<div class="t" style="left:540.80px;top:497.57px;font-size:13.5px;color:#333;transform:scaleX(0.9306)">3184898938</div>
<div class="t" style="left:374.20px;top:537.57px;font-size:13.5px;color:#333;transform:scaleX(0.9997)">Morton Palmerston</div>
<div class="t" style="left:540.80px;top:537.57px;font-size:13.5px;color:#333;transform:scaleX(0.9306)">4056276453</div>
<div class="t" style="left:374.20px;top:577.57px;font-size:13.5px;color:#333;transform:scaleX(0.9997)">Morton Palmerston</div>
<div class="t" style="left:540.80px;top:577.57px;font-size:13.5px;color:#333;transform:scaleX(0.9286)">(405)6276453</div>
<div class="t" style="left:374.20px;top:617.57px;font-size:13.5px;color:#333;transform:scaleX(0.9997)">Morton Palmerston</div>
<div class="t" style="left:540.80px;top:617.57px;font-size:13.5px;color:#333;transform:scaleX(0.9306)">4056276453</div>
<div class="t" style="left:374.20px;top:657.57px;font-size:13.5px;color:#333;transform:scaleX(0.9997)">Morton Palmerston</div>
<div class="t" style="left:540.80px;top:657.57px;font-size:13.5px;color:#333;transform:scaleX(0.9306)">4056276453</div></div>
<div class="a" style="left:0;top:0;width:1160px;height:700px;clip-path:inset(162px 13px 40px 817px)"><div class="t" style="left:878.19px;top:644.87px;font-size:13.5px;color:#333;transform:scaleX(0.9128)">Residencia</div></div>
</body></html>
